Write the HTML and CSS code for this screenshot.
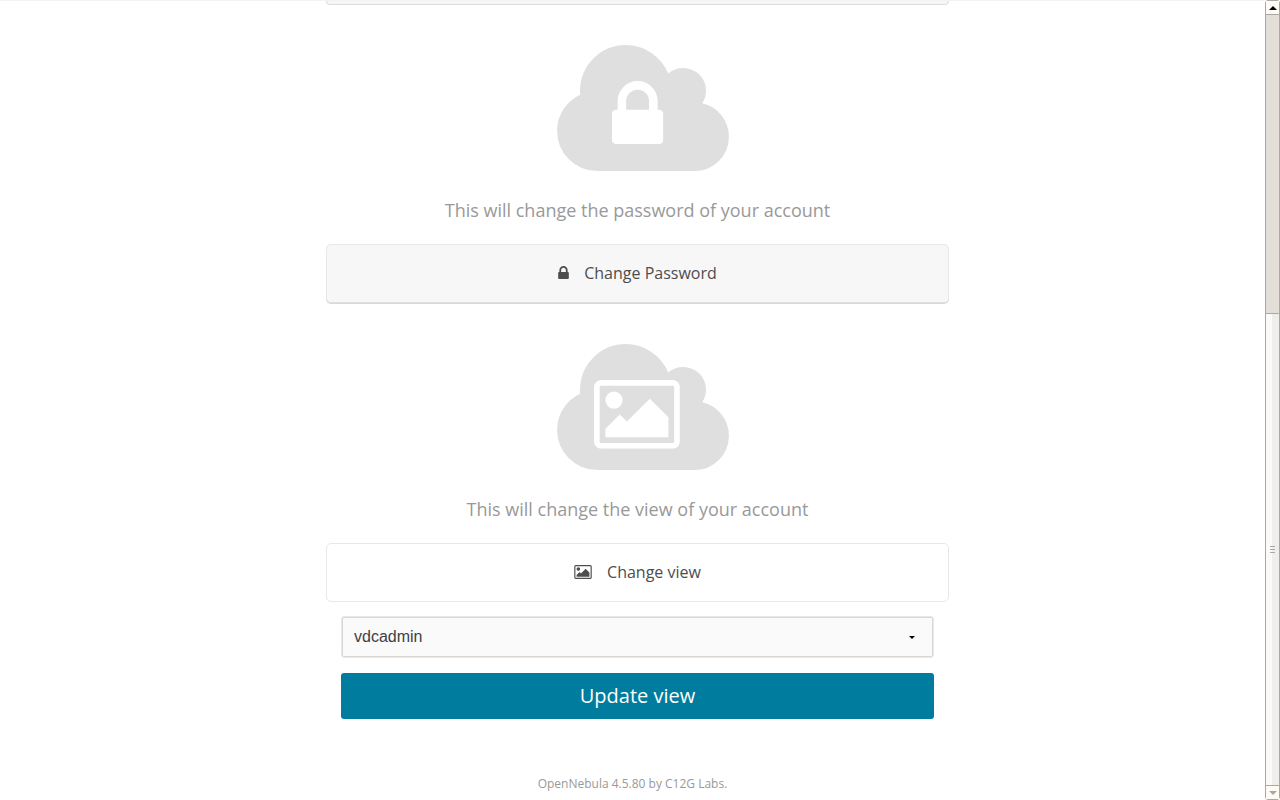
FILE: index.html
```html
<!DOCTYPE html>
<html lang="en">
<head>
<meta charset="utf-8">
<title>Account settings</title>
<link rel="stylesheet" href="styles.css">
</head>
<body>
<svg class="symbols" aria-hidden="true">
  <symbol id="lock" viewBox="320 128 1152 1408"><path d="M640 768h512v-192q0-106-75-181t-181-75-181 75-75 181v192zm832 96v576q0 40-28 68t-68 28h-960q-40 0-68-28t-28-68v-576q0-40 28-68t68-28h32v-192q0-184 132-316t316-132 316 132 132 316v192h32q40 0 68 28t28 68z"/></symbol>
  <symbol id="picture" viewBox="-64 128 1920 1536"><path d="M576 576q0 80-56 136t-136 56-136-56-56-136 56-136 136-56 136 56 56 136zm1024 384v448h-1408v-192l320-320 160 160 512-512zm96-704h-1600q-13 0-22.5 9.5t-9.5 22.5v1216q0 13 9.5 22.5t22.5 9.5h1600q13 0 22.5-9.5t9.5-22.5v-1216q0-13-9.5-22.5t-22.5-9.5zm160 32v1216q0 66-47 113t-113 47h-1600q-66 0-113-47t-47-113v-1216q0-66 47-113t113-47h1600q66 0 113 47t47 113z"/></symbol>
  <symbol id="cloud" viewBox="64 128 1920 1408"><path d="M1984 1152q0 159-112.500 271.500t-271.500 112.500h-1088q-185 0-316.500-131.500t-131.500-316.500q0-132 71-241.500t187-163.500q-2-28-2-43 0-212 150-362t362-150q158 0 286.500 88t187.500 230q70-62 166-62 106 0 181 75t75 181q0 75-41 138 129 30 213 134.500t84 239.500z"/></symbol>
</svg>
<div class="window">
  <div class="page">
    <main class="settings">
      <div class="panel-end"></div>
      <section class="option">
        <svg class="cloud" viewBox="0 0 1920 1408" aria-hidden="true">
          <use href="#cloud" width="1920" height="1408"/>
          <use class="cutout" href="#lock" x="612" y="403" width="576" height="704"/>
        </svg>
        <p class="hint">This will change the password of your account</p>
        <button class="choice choice-active" type="button">
          <svg class="icon-lock" aria-hidden="true"><use href="#lock"/></svg>
          <span>Change Password</span>
        </button>
      </section>
      <section class="option">
        <svg class="cloud" viewBox="0 0 1920 1408" aria-hidden="true">
          <use href="#cloud" width="1920" height="1408"/>
          <use class="cutout" href="#picture" x="412" y="403" width="960" height="768"/>
        </svg>
        <p class="hint">This will change the view of your account</p>
        <button class="choice" type="button">
          <svg class="icon-picture" aria-hidden="true"><use href="#picture"/></svg>
          <span>Change view</span>
        </button>
      </section>
      <form class="view-form">
        <div class="select-box">
          <select class="select" aria-label="View"><option>vdcadmin</option></select>
          <svg class="arrow" viewBox="0 0 6 3" aria-hidden="true"><path d="M0 0h6L3 3z"/></svg>
        </div>
        <button class="update" type="button">Update view</button>
      </form>
    </main>
    <footer class="footer">OpenNebula 4.5.80 by C12G Labs.</footer>
  </div>
  <div class="scrollbar" aria-hidden="true">
    <div class="step step-up"><svg class="step-arrow" viewBox="0 0 8 4"><path d="M0 4h8L4 0z"/></svg></div>
    <div class="thumb"></div>
    <div class="track"><div class="grip"></div></div>
    <div class="step step-down"><svg class="step-arrow" viewBox="0 0 8 4"><path d="M0 0h8L4 4z"/></svg></div>
  </div>
</div>
</body>
</html>
```

FILE: styles.css
```css
* { box-sizing: border-box; }

body {
  margin: 0;
  background: #fff;
  color: #4d4d4d;
  font-family: "Open Sans", sans-serif;
}

.symbols { position: absolute; width: 0; height: 0; }

.window {
  display: flex;
  height: 100vh;
  overflow: hidden;
}

.page {
  flex: 1;
  border-top: 1px solid #f3f3f3;
}

.settings {
  max-width: 633px;
  margin: 0 auto;
  padding-left: 10px;
}

.panel-end {
  height: 4px;
  border: 1px solid #ddd;
  border-top: 0;
  border-radius: 0 0 5px 5px;
  background: #f6f6f6;
}

.option {
  display: flex;
  flex-direction: column;
  align-items: center;
  padding-top: 40px;
}

.cloud {
  width: 172px;
  height: 126px;
  margin-left: 10px;
  fill: #dfdfdf;
}

.cutout { fill: #fff; }

.hint {
  margin: 24px 0 18px;
  color: #999;
  font-size: 18px;
  line-height: 31px;
}

.choice {
  display: flex;
  align-items: center;
  justify-content: center;
  gap: 15px;
  width: 100%;
  height: 59px;
  padding: 0 0 2px;
  border: 1px solid #e8e8e8;
  border-radius: 5px;
  background: #fff;
  color: #4d4d4d;
  font: 16px/24px "Open Sans", sans-serif;
}

.choice-active {
  margin-bottom: 1px;
  border-bottom-color: #e0e0e0;
  background: #f7f7f7;
  box-shadow: 0 1px 0 #d8d8d8;
}

.icon-lock { width: 11px; height: 13px; fill: #4d4d4d; }
.icon-picture { width: 18px; height: 14px; fill: #4d4d4d; }

.view-form { padding: 14px 15px 0; }

.select-box { position: relative; }

.select {
  display: block;
  width: 100%;
  height: 42px;
  padding: 0 12px;
  border: 1px solid #e9e6e3;
  border-radius: 3px;
  appearance: none;
  background: #fafafa;
  box-shadow: inset 0 0 0 1px #dcd7d2;
  color: #404040;
  font: 16px/24px "Liberation Sans", sans-serif;
}

.arrow {
  position: absolute;
  top: 20px;
  right: 19px;
  width: 6px;
  height: 3px;
  fill: #000;
}

.update {
  display: block;
  width: 100%;
  height: 46px;
  margin-top: 15px;
  padding: 0;
  border: 0;
  border-radius: 3px;
  background: #007d9e;
  color: #fff;
  font: 20px/30px "Open Sans", sans-serif;
}

.footer {
  margin-top: 55px;
  color: #999;
  font-size: 12px;
  line-height: 20px;
  text-align: center;
}

.scrollbar {
  display: flex;
  flex-direction: column;
  width: 15px;
  border: 1px solid #aaa8a5;
  border-radius: 3px;
}

.step {
  display: flex;
  align-items: center;
  justify-content: center;
  height: 14px;
  background: #fefaf4;
}

.step-up { fill: #000; border-bottom: 1px solid #aaa8a5; }
.step-down { fill: #aaa8a5; border-top: 1px solid #aaa8a5; }
.step-arrow { width: 8px; height: 4px; }

.thumb {
  flex: 298;
  border-bottom: 1px solid #aaa8a5;
  background: #e3ded8;
}

.track {
  display: flex;
  align-items: center;
  justify-content: center;
  flex: 472;
  background: linear-gradient(to right, #fbfaf8 50%, #efeeec 50%);
}

.grip {
  width: 5px;
  height: 7px;
  border: solid #aaa8a5;
  border-width: 1px 0;
  background: linear-gradient(transparent 2px, #aaa8a5 2px, #aaa8a5 3px, transparent 3px);
}
```
